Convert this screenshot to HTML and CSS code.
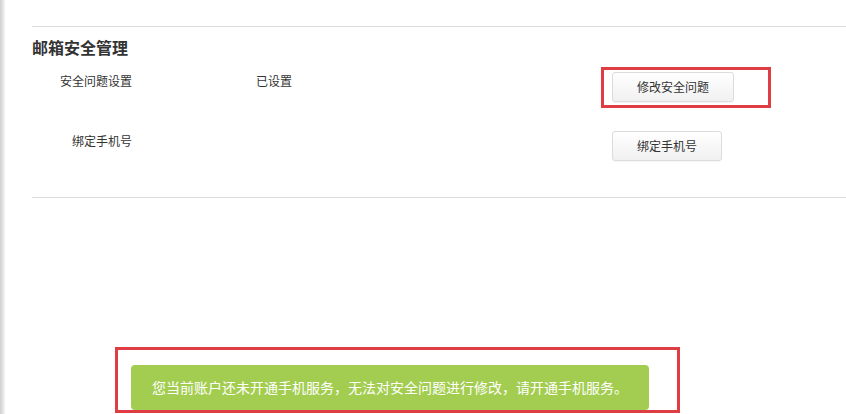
FILE: index.html
```html
<!DOCTYPE html>
<html lang="zh-CN">
<head>
<meta charset="utf-8">
<title>邮箱安全管理</title>
<link rel="stylesheet" href="styles.css">
</head>
<body>
<div class="page">
  <div class="edge"></div>
  <main class="main">
    <section class="panel">
      <h2 class="title">邮箱安全管理</h2>
      <div class="row">
        <div class="label">安全问题设置</div>
        <div class="value">已设置</div>
        <div class="action">
          <button class="btn btn-wide">修改安全问题</button>
          <span class="mark mark-btn"></span>
        </div>
      </div>
      <div class="row">
        <div class="label">绑定手机号</div>
        <div class="value"></div>
        <div class="action">
          <button class="btn">绑定手机号</button>
        </div>
      </div>
    </section>
    <div class="notice-area">
      <div class="notice">
        您当前账户还未开通手机服务，无法对安全问题进行修改，请开通手机服务。
        <span class="mark mark-notice"></span>
      </div>
    </div>
  </main>
</div>
</body>
</html>
```

FILE: styles.css
```css
html, body {
  margin: 0;
  padding: 0;
  background: #fff;
}
body {
  font-family: "Noto Sans CJK SC", "Microsoft YaHei", sans-serif;
  color: #333;
  width: 846px;
  height: 414px;
  overflow: hidden;
}
.page {
  display: flex;
  height: 414px;
}
.edge {
  width: 5px;
  flex: none;
  background: linear-gradient(to right, #cfcfcf, #e4e4e4 60%, #f6f6f6);
}
.main {
  flex: 1;
  padding-left: 27px;
  padding-top: 26px;
}
.panel {
  border-top: 1px solid #dcdcdc;
  border-bottom: 1px solid #dcdcdc;
  padding-bottom: 36px;
}
.title {
  margin: 8px 0 0;
  font-size: 16px;
  font-weight: bold;
  line-height: 24px;
  color: #333;
}
.row {
  display: flex;
  align-items: flex-start;
  margin-top: 13px;
}
.row + .row {
  margin-top: 29px;
}
.label {
  width: 100px;
  text-align: right;
  font-size: 12px;
  line-height: 18px;
  color: #333;
}
.row + .row .label {
  padding-top: 1px;
}
.value {
  margin-left: 124px;
  width: 356px;
  font-size: 12px;
  line-height: 18px;
  color: #333;
}
.action {
  position: relative;
}
.btn {
  display: block;
  height: 30px;
  padding: 0 24px;
  border: 1px solid #dcdcdc;
  border-radius: 3px;
  background: linear-gradient(#ffffff, #f1f1f1);
  font-family: inherit;
  font-size: 12px;
  line-height: 28px;
  color: #333;
  box-shadow: 0 1px 1px rgba(0,0,0,0.04);
}
.mark {
  position: absolute;
  border: 3px solid #de3d43;
  pointer-events: none;
}
.mark-btn {
  left: -11px;
  top: -5px;
  width: 164px;
  height: 35px;
}
.notice-area {
  padding-top: 167px;
  padding-left: 99px;
}
.notice {
  position: relative;
  width: 518px;
  height: 45px;
  box-sizing: border-box;
  background: #a3cd50;
  border-radius: 4px;
  color: #fff;
  font-size: 14px;
  line-height: 45px;
  text-align: center;
}
.mark-notice {
  left: -16px;
  top: -18px;
  width: 559px;
  height: 60px;
}
```
